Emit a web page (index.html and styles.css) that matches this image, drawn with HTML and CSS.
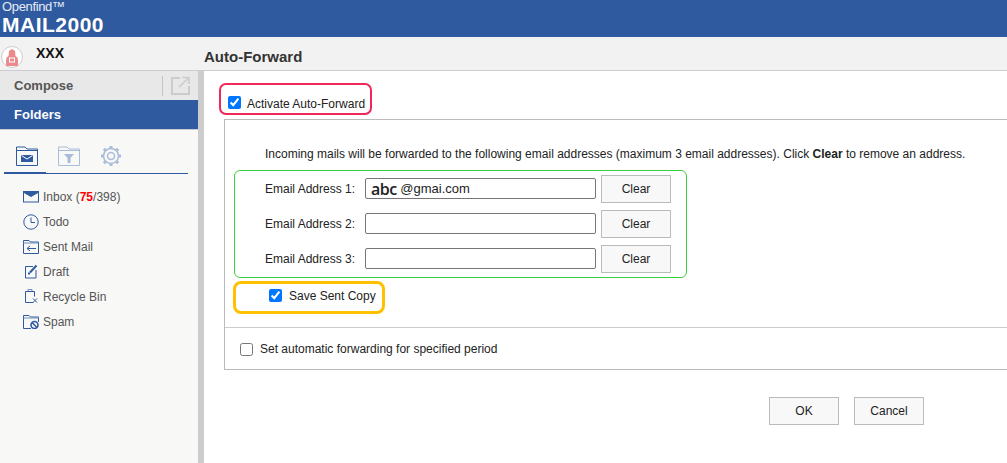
FILE: index.html
```html
<!DOCTYPE html>
<html lang="en">
<head>
    <meta charset="UTF-8">
    <meta name="viewport" content="width=device-width, initial-scale=1.0">
    <title>MAIL2000 - Auto-Forward</title>
    <link rel="stylesheet" href="styles.css">
</head>
<body>
    <header class="topbar">
        <div class="brand-small">Openfind™</div>
        <div class="brand-big">MAIL2000</div>
    </header>

    <div class="layout">
        <aside class="sidebar">
            <div class="user-row">
                <span class="avatar">
                    <svg width="22" height="22" viewBox="0 0 22 22">
                        <circle cx="11" cy="11" r="10.5" fill="#fff" stroke="#ccc"/>
                        <path d="M5 20 V14 Q5 11 7.5 10 L8 5 Q11 1.5 14 5 L14.5 10 Q17 11 17 14 V20 Z" fill="#ea8a8d"/>
                        <rect x="8.5" y="12" width="5" height="4" fill="none" stroke="#fff"/>
                    </svg>
                </span>
                <span class="user-name">XXX</span>
            </div>
            <div class="panel">
                <div class="compose-row">
                    <span>Compose</span>
                    <span class="compose-sep"></span>
                    <svg class="compose-icon" width="19" height="19" viewBox="0 0 19 19" fill="none" stroke="#ccc" stroke-width="2">
                        <path d="M9 2 H1 V18 H18 V10"/>
                        <path d="M8 11 L17 2.5 M11.5 1.5 H18 V8" stroke-width="1.6"/>
                    </svg>
                </div>
                <div class="folders-row">Folders</div>
                <div class="tabs">
                    <svg width="22" height="20" viewBox="0 0 22 20" fill="none" stroke="#2f5aa0" stroke-width="1">
                        <path d="M.5 19 V1 H9 L11 3 H21.5 V19.5 H.5 Z"/>
                        <path d="M.5 4.5 H21.5"/>
                        <rect x="5" y="9" width="12" height="7" fill="#2f5aa0" stroke="none"/>
                        <path d="M5.5 9.5 L11 13 L16.5 9.5" stroke="#fff"/>
                    </svg>
                    <svg width="22" height="20" viewBox="0 0 22 20" fill="none" stroke="#a9bcd9" stroke-width="1">
                        <path d="M.5 19 V1 H9 L11 3 H21.5 V19.5 H.5 Z"/>
                        <path d="M.5 4.5 H21.5"/>
                        <path d="M6 8 H16 L12.5 12 V17 H9.5 V12 Z" fill="#a9bcd9" stroke="none"/>
                    </svg>
                    <svg width="22" height="22" viewBox="0 0 22 22" fill="none" stroke="#a9bcd9">
                        <circle cx="11" cy="11" r="7.5" stroke-width="1.5"/>
                        <circle cx="11" cy="11" r="3.5" stroke-width="1.5"/>
                        <path d="M11 1 V4 M11 18 V21 M1 11 H4 M18 11 H21 M3.9 3.9 L6 6 M16 16 L18.1 18.1 M3.9 18.1 L6 16 M16 6 L18.1 3.9" stroke-width="3"/>
                    </svg>
                </div>
                <div class="tab-line"><span class="tab-line-active"></span></div>
                <ul class="folder-list">
                    <li>
                        <svg width="16" height="13" viewBox="0 0 16 13" fill="none" stroke="#2f5aa0">
                            <rect x=".5" y="1.5" width="15" height="10.5"/>
                            <path d="M1 1.5 H15 V2.5 L8 6.5 L1 2.5 Z" fill="#2f5aa0"/>
                        </svg>
                        <span>Inbox (<b class="unread">75</b>/398)</span>
                    </li>
                    <li>
                        <svg width="16" height="16" viewBox="0 0 16 16" fill="none" stroke="#2f5aa0">
                            <circle cx="8" cy="8" r="7.2"/>
                            <path d="M8 3.5 V8.5 H12"/>
                        </svg>
                        <span>Todo</span>
                    </li>
                    <li>
                        <svg width="16" height="14" viewBox="0 0 16 14" fill="none" stroke="#2f5aa0">
                            <path d="M.5 13.5 V.5 H6 L7.5 2 H15.5 V13.5 Z"/>
                            <path d="M.5 3 H15.5" stroke="#6f8dbd"/>
                            <path d="M13 8.5 H4.5 M7 6 L4 8.5 L7 11"/>
                        </svg>
                        <span>Sent Mail</span>
                    </li>
                    <li>
                        <svg width="16" height="15" viewBox="0 0 16 15" fill="none" stroke="#2f5aa0">
                            <path d="M10 2.5 H2.5 V14 H13 V6"/>
                            <path d="M7 8.5 L13.5 1.5" stroke-width="2"/>
                            <rect x="5" y="8.5" width="2" height="2" fill="#2f5aa0" stroke="none"/>
                        </svg>
                        <span>Draft</span>
                    </li>
                    <li>
                        <svg width="16" height="15" viewBox="0 0 16 15" fill="none" stroke="#2f5aa0">
                            <path d="M10.5 13.5 H2.5 V2.5 H11.5 V7.5"/>
                            <path d="M5 2 V.5 H9 V2" stroke="#6f8dbd"/>
                            <path d="M10 9.5 L14 13.5 M14 9.5 L10 13.5"/>
                        </svg>
                        <span>Recycle Bin</span>
                    </li>
                    <li>
                        <svg width="16" height="14" viewBox="0 0 16 14" fill="none" stroke="#2f5aa0">
                            <path d="M8 13.5 H.5 V.5 H6 L7.5 2 H15.5 V7"/>
                            <path d="M.5 3 H15.5" stroke="#6f8dbd"/>
                            <circle cx="11.5" cy="10" r="3.5" stroke-width="1.6"/>
                            <path d="M9 7.5 L14 12.5" stroke-width="1.6"/>
                        </svg>
                        <span>Spam</span>
                    </li>
                </ul>
            </div>
        </aside>

        <main class="main">
            <h1 class="page-title">Auto-Forward</h1>
            <div class="content">
                <label class="activate-box">
                    <input type="checkbox" checked>
                    <span>Activate Auto-Forward</span>
                </label>

                <section class="form-box">
                    <p class="hint">Incoming mails will be forwarded to the following email addresses (maximum 3 email addresses). Click <b>Clear</b> to remove an address.</p>

                    <div class="address-box">
                        <div class="address-row">
                            <label>Email Address 1:</label>
                            <div class="text-field"><span class="abc">abc</span> @gmai.com</div>
                            <button class="btn">Clear</button>
                        </div>
                        <div class="address-row">
                            <label for="addr2">Email Address 2:</label>
                            <input class="text-field" type="text" id="addr2">
                            <button class="btn">Clear</button>
                        </div>
                        <div class="address-row">
                            <label for="addr3">Email Address 3:</label>
                            <input class="text-field" type="text" id="addr3">
                            <button class="btn">Clear</button>
                        </div>
                    </div>

                    <label class="save-box">
                        <input type="checkbox" checked>
                        <span>Save Sent Copy</span>
                    </label>

                    <label class="period-row">
                        <input type="checkbox">
                        <span>Set automatic forwarding for specified period</span>
                    </label>
                </section>

                <div class="actions">
                    <button class="btn">OK</button>
                    <button class="btn">Cancel</button>
                </div>
            </div>
        </main>
    </div>
</body>
</html>
```

FILE: styles.css
```css
body {
    font-family: "Liberation Sans", Arial, sans-serif;
    font-size: 12px;
    margin: 0;
    padding: 0;
    height: 463px;
    overflow: hidden;
    background-color: #fff;
    color: #222;
}

.topbar {
    height: 37px;
    background-color: #2f5aa0;
    color: #fff;
    padding-left: 2px;
    overflow: hidden;
}

.brand-small {
    font-size: 13px;
    line-height: 13px;
    letter-spacing: -0.35px;
    color: #e4eaf4;
}

.brand-big {
    font-size: 21px;
    font-weight: bold;
    line-height: 24px;
    letter-spacing: 0.5px;
}

.layout {
    display: flex;
    height: 426px;
}

.sidebar {
    width: 204px;
    flex-shrink: 0;
    display: flex;
    flex-direction: column;
    background-color: #f2f2f2;
}

.user-row {
    height: 33px;
    display: flex;
    align-items: center;
    flex-shrink: 0;
}

.avatar {
    display: flex;
    margin: 6px 0 0 1px;
}

.user-name {
    font-size: 14px;
    font-weight: bold;
    color: #111;
    margin-left: 13px;
    margin-top: -2px;
}

.panel {
    flex: 1;
    background-color: #f8f8f6;
    border-top: 1px solid #ccc;
    border-right: 6px solid #ccc;
}

.compose-row {
    height: 29px;
    display: flex;
    align-items: center;
    padding-left: 14px;
    background-color: #e8e8e8;
    font-size: 13px;
    font-weight: bold;
    color: #555;
}

.compose-sep {
    width: 1px;
    height: 20px;
    background-color: #c4c4c4;
    margin-left: 89px;
}

.compose-icon {
    margin-left: 8px;
}

.folders-row {
    height: 29px;
    line-height: 29px;
    padding-left: 14px;
    background-color: #2f5aa0;
    border-bottom: 1px solid #ccc;
    color: #fff;
    font-size: 13px;
    font-weight: bold;
}

.tabs {
    display: flex;
    align-items: center;
    gap: 20px;
    padding: 14px 0 0 16px;
    height: 24px;
}

.tab-line {
    height: 1px;
    margin: 5px 10px 0 4px;
    background-color: #2f5aa0;
}

.tab-line-active {
    display: block;
    width: 42px;
    height: 2px;
    background-color: #2f5aa0;
    position: relative;
    top: -1px;
}

.folder-list {
    list-style: none;
    margin: 10px 0 0;
    padding: 0;
}

.folder-list li {
    height: 25px;
    display: flex;
    align-items: center;
    gap: 4px;
    padding-left: 23px;
    color: #555;
}

.folder-list svg {
    flex-shrink: 0;
}

.unread {
    color: #f00;
}

.main {
    flex: 1;
    display: flex;
    flex-direction: column;
    min-width: 0;
}

.page-title {
    height: 34px;
    line-height: 40px;
    margin: 0;
    box-sizing: border-box;
    background-color: #f2f2f2;
    border-bottom: 1px solid #ccc;
    font-size: 15px;
    color: #333;
}

.content {
    flex: 1;
    padding: 12px 0 0 15px;
}

.activate-box {
    display: flex;
    align-items: center;
    gap: 6px;
    width: 153px;
    height: 32px;
    box-sizing: border-box;
    padding: 6px 0 0 7px;
    margin-bottom: 4px;
    border: 2px solid #f0275a;
    border-radius: 7px;
}

.activate-box span {
    margin-top: 4px;
}

input[type="checkbox"] {
    width: 13px;
    height: 13px;
    margin: 0;
    accent-color: #0075ff;
}

.form-box {
    margin-left: 5px;
    height: 251px;
    box-sizing: border-box;
    border: 1px solid #bbb;
    border-right: 0;
}

.hint {
    margin: 27px 0 0 40px;
    line-height: 14px;
}

.address-box {
    width: 453px;
    height: 108px;
    box-sizing: border-box;
    margin: 9px 0 0 9px;
    padding: 4px 0 0 30px;
    border: 1px solid #3ccf3c;
    border-radius: 6px;
    display: flex;
    flex-direction: column;
    gap: 7px;
}

.address-row {
    display: flex;
    align-items: center;
    height: 28px;
}

.address-row label {
    width: 100px;
}

.text-field {
    width: 231px;
    height: 21px;
    box-sizing: border-box;
    margin: -1px 0 0;
    padding: 0 5px;
    border: 1px solid #767676;
    border-radius: 2px;
    background-color: #fff;
    font-family: inherit;
    font-size: 13px;
    display: flex;
    align-items: center;
    white-space: pre;
}

.abc {
    font-family: "Open Sans", sans-serif;
    font-size: 16px;
    font-weight: 600;
    letter-spacing: -0.5px;
    color: #222;
}

.btn {
    width: 70px;
    height: 28px;
    box-sizing: border-box;
    padding: 0;
    background-color: #f8f8f8;
    border: 1px solid #bbb;
    font-family: inherit;
    font-size: 12px;
    color: #222;
    cursor: pointer;
}

.address-row .btn {
    margin-left: 5px;
}

.save-box {
    display: flex;
    align-items: center;
    gap: 7px;
    width: 152px;
    height: 33px;
    box-sizing: border-box;
    margin: 3px 0 0 8px;
    padding: 0 0 5px 33px;
    border: 3px solid #ffc000;
    border-radius: 8px;
}

.save-box span {
    margin-top: 2px;
}

.period-row {
    display: flex;
    align-items: center;
    gap: 7px;
    height: 42px;
    margin-top: 13px;
    padding-left: 15px;
    border-top: 1px solid #ccc;
}

.actions {
    display: flex;
    gap: 15px;
    margin: 27px 0 0 550px;
}
```
